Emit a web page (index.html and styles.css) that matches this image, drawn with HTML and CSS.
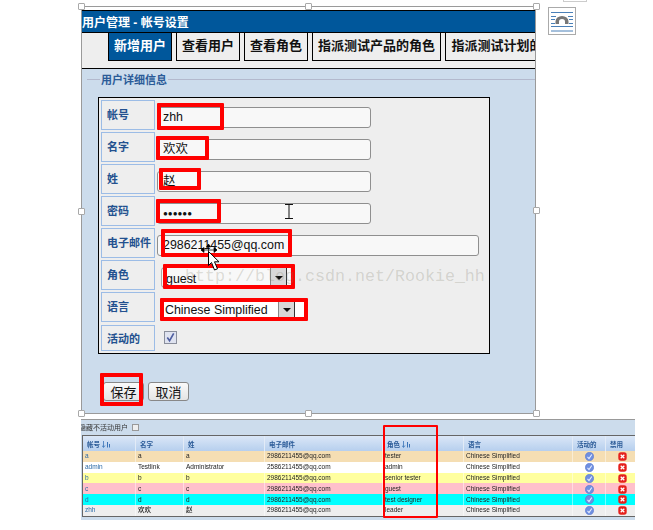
FILE: index.html
```html
<!DOCTYPE html>
<html lang="zh">
<head>
<meta charset="utf-8">
<title>用户管理 - 帐号设置</title>
<link rel="stylesheet" href="styles.css">
</head>
<body>
<svg class="defs" width="0" height="0">
  <symbol id="i-ok" viewBox="0 0 9 9"><circle cx="4.500" cy="4.500" r="4.200" fill="#6f8fe0" stroke="#5674cc" stroke-width=".5"/><path d="M2.500 4.800 4 6.500 6.800 2.500" fill="none" stroke="#e6edff" stroke-width="1.100"/></symbol>
  <symbol id="i-no" viewBox="0 0 9 9"><rect x=".3" y=".3" width="8.400" height="8.400" rx="2.600" fill="#e5201c"/><path d="M2.700 2.700 6.300 6.300M6.300 2.700 2.700 6.300" stroke="#fff" stroke-width="1.300"/></symbol>
  <symbol id="i-sort" viewBox="0 0 9 7"><path d="M1.500 0v6M0 4.500 1.500 6.500 3 4.500" fill="none" stroke="#3b74b8" stroke-width=".8"/><path d="M5 1h1v5.500H5zM7 3h1v3.500H7z" fill="#3b74b8"/></symbol>
</svg>
<main class="sheet">
  <section class="frame">
    <h1 class="title">用户管理 - 帐号设置</h1>
    <nav class="tabs">
      <a class="tab tab-on">新增用户</a>
      <a class="tab">查看用户</a>
      <a class="tab">查看角色</a>
      <a class="tab tab-wide">指派测试产品的角色</a>
      <a class="tab tab-cut">指派测试计划的角色</a>
    </nav>
    <div class="panel">
      <div class="legend-line"><span class="legend">用户详细信息</span></div>
      <div class="form-box">
        <div class="row"><label class="lab">帐号</label><div class="field">zhh</div></div>
        <div class="row"><label class="lab">名字</label><div class="field">欢欢</div></div>
        <div class="row"><label class="lab">姓</label><div class="field">赵</div></div>
        <div class="row"><label class="lab">密码</label><div class="field dots">●●●●●●</div></div>
        <div class="row"><label class="lab">电子邮件</label><div class="field field-long">2986211455@qq.com</div></div>
        <div class="row"><label class="lab">角色</label>
          <div class="pick pick-role"><span class="pick-text">guest</span><span class="pick-btn"><i class="caret"></i></span></div></div>
        <div class="row"><label class="lab">语言</label>
          <div class="pick pick-lang"><span class="pick-text">Chinese Simplified</span><span class="pick-btn"><i class="caret"></i></span></div></div>
        <div class="row row-last"><label class="lab">活动的</label>
          <span class="check"><svg viewBox="0 0 12 12" width="11" height="11"><path d="M2.500 6 5 9.500 9.500 1.500" fill="none" stroke="#4f5fa0" stroke-width="1.800"/></svg></span></div>
      </div>
      <div class="actions"><button class="btn">保存</button><button class="btn">取消</button></div>
    </div>
  </section>

  <section class="shot">
    <div class="shot-top">隐藏不活动用户 <span class="mini-check"></span></div>
    <table class="users">
      <colgroup><col class="c1"><col class="c2"><col class="c3"><col class="c4"><col class="c5"><col class="c6"><col class="c7"><col class="c8"></colgroup>
      <thead><tr><th>帐号 <svg class="sort"><use href="#i-sort"/></svg></th><th>名字</th><th>姓</th><th>电子邮件</th><th>角色 <svg class="sort"><use href="#i-sort"/></svg></th><th>语言</th><th>活动的</th><th>禁用</th></tr></thead>
      <tbody>
        <tr class="r-tester"><td class="link">a</td><td>a</td><td>a</td><td>2986211455@qq.com</td><td>tester</td><td>Chinese Simplified</td><td class="mid"><svg class="ico"><use href="#i-ok"/></svg></td><td class="mid last"><svg class="ico"><use href="#i-no"/></svg></td></tr>
        <tr class="r-admin"><td class="link">admin</td><td>Testlink</td><td>Administrator</td><td>2586211455@qq.com</td><td>admin</td><td>Chinese Simplified</td><td class="mid"><svg class="ico"><use href="#i-ok"/></svg></td><td class="mid last"><svg class="ico"><use href="#i-no"/></svg></td></tr>
        <tr class="r-senior"><td class="link">b</td><td>b</td><td>b</td><td>2986211455@qq.com</td><td>senior tester</td><td>Chinese Simplified</td><td class="mid"><svg class="ico"><use href="#i-ok"/></svg></td><td class="mid last"><svg class="ico"><use href="#i-no"/></svg></td></tr>
        <tr class="r-guest"><td class="link">c</td><td>c</td><td>c</td><td>2986211455@qq.com</td><td>guest</td><td>Chinese Simplified</td><td class="mid"><svg class="ico"><use href="#i-ok"/></svg></td><td class="mid last"><svg class="ico"><use href="#i-no"/></svg></td></tr>
        <tr class="r-design"><td class="link">d</td><td>d</td><td>d</td><td>2986211455@qq.com</td><td>test designer</td><td>Chinese Simplified</td><td class="mid"><svg class="ico"><use href="#i-ok"/></svg></td><td class="mid last"><svg class="ico"><use href="#i-no"/></svg></td></tr>
        <tr class="r-leader"><td class="link">zhh</td><td>欢欢</td><td>赵</td><td>2986211455@qq.com</td><td>leader</td><td>Chinese Simplified</td><td class="mid"><svg class="ico"><use href="#i-ok"/></svg></td><td class="mid last"><svg class="ico"><use href="#i-no"/></svg></td></tr>
      </tbody>
    </table>
  </section>
</main>

<!-- overlays: selection handles, red annotations, watermark, cursors -->
<i class="h h1"></i><i class="h h2"></i><i class="h h3"></i><i class="h h4"></i><i class="h h5"></i><i class="h h6"></i><i class="h h7"></i><i class="h h8"></i>
<i class="mark m1"></i><i class="mark m2"></i><i class="mark m3"></i><i class="mark m4"></i><i class="mark m5"></i><i class="mark m6"></i><i class="mark m7"></i><i class="mark m8"></i><i class="mark m9"></i>
<div class="wm">http://blog.csdn.net/Rookie_hh</div>
<svg class="ibeam" width="8" height="15" viewBox="0 0 8 15"><path d="M0 .5h8M4 .5v14M0 14.500h8" fill="none" stroke="#111"/></svg>
<svg class="move" width="18" height="12" viewBox="0 0 18 12"><path d="M1 6h16M1 6l3-2.500v5zM17 6l-3-2.500v5zM8.500 1v10M8.500 0 6.500 3h4z" fill="#000" stroke="#000" stroke-width=".7"/></svg>
<svg class="arrow" width="14" height="22" viewBox="0 0 14 22"><path d="M1.500 1.500v14l3-3 3 7.500 3-1.200-3-7h4.500z" fill="#fff" stroke="#000"/></svg>
<div class="layout-icon"><svg width="22" height="22" viewBox="0 0 22 22"><path d="M0 2.500h22M0 6.500h5M17 6.500h5M0 9.500h4M18 9.500h4M0 13.500h4M18 13.500h4M0 16.500h22M0 21h22" stroke="#4a80b8" fill="none"/><path d="M4.500 14v-2.500a6.500 5.500 0 0 1 13 0V14h-3.500v-2.500a3 2.500 0 0 0-6 0V14z" fill="#777"/></svg></div>
<i class="top-scrap"></i>
</body>
</html>
```
FILE: styles.css
```css
* { box-sizing: border-box; }
html, body { margin: 0; height: 530px; overflow: hidden; background: #fff; }
body { position: relative; font-family: "Liberation Sans", "Noto Sans CJK SC", sans-serif; }
.defs { position: absolute; }
.sheet { padding: 6px 0 0 81px; }

/* top picture */
.frame { width: 455px; height: 408px; border: 1px solid #9a9a9a; padding-top: 3px; background: #fff; overflow: hidden; }
.title { margin: 0; height: 23px; background: #00579b; border-top: 1px solid #000; border-bottom: 1px solid #000; color: #fff; font-size: 12px; line-height: 24px; font-weight: 700; white-space: nowrap; }
.tabs { display: flex; gap: 4px; height: 36px; padding-left: 26px; background: #eee; border-bottom: 1px solid #000; overflow: hidden; }
.tab { flex: none; width: 64px; height: 28px; background: #eee; border: 1px solid #000; border-top: 0; font-size: 13px; font-weight: 700; line-height: 26px; text-align: center; color: #111; }
.tab-on { background: #00579b; color: #fff; }
.tab-wide { width: 129px; }
.tab-cut { width: 129px; border-right: 0; }
.panel { height: 345px; background: #ccdcec; position: relative; }
.legend-line { position: absolute; left: 5px; right: 0; top: 10px; border-top: 1px solid #b3b9cd; }
.legend { position: absolute; left: 13px; top: -7px; padding: 0 1px; font-size: 11px; line-height: 15px; font-weight: 700; color: #2b5b98; background: #ccdcec; }
.form-box { position: absolute; left: 16px; top: 28px; width: 392px; height: 257px; background: #eee; border: 1px solid #000; padding: 2px; }
.row { display: flex; align-items: flex-start; height: 32px; }
.row-last { height: 27px; padding-top: 1px; }
.lab { flex: none; width: 54px; height: 30px; border: 1px solid #9cbce6; color: #23518f; font-size: 11px; line-height: 28px; font-weight: 700; padding-left: 5px; white-space: nowrap; }
.row-last .lab { height: 26px; line-height: 26px; }
.field { width: 214px; height: 21px; margin: 7px 0 0 2px; border: 1px solid #8f8f8f; border-radius: 3px; background: #f8f8f8; font-size: 12.400px; line-height: 19px; color: #111; padding-left: 5px; white-space: nowrap; }
.field-long { width: 322px; }
.dots { font-size: 8px; padding-left: 5px; }
.pick { display: flex; font-size: 12.400px; color: #111; }
.pick-role { width: 129px; height: 21px; margin: 7px 0 0 6px; background: #f8f8f8; border: 1px solid #aaa; border-right: 0; border-radius: 4px 0 0 4px; padding-left: 4px; line-height: 22px; }
.pick-lang { width: 140px; height: 17px; margin: 9px 0 0 9px; background: #fff; padding-left: 1px; line-height: 18px; }
.pick-text { flex: 1; white-space: nowrap; }
.pick-btn { flex: none; width: 17px; background: #d8d8d8; border-left: 1px solid #888; border-right: 1px solid #333; display: flex; align-items: center; justify-content: center; }
.pick-role .pick-btn { margin-right: 3px; }
.pick-lang .pick-btn { margin-right: 9px; }
.caret { width: 0; height: 0; border: 4px solid transparent; border-top: 4px solid #111; border-bottom: 0; }
.check { width: 13px; height: 13px; margin: 6px 0 0 9px; border: 1px solid #8a8f9c; background: #dfe3f0; display: block; line-height: 0; }
.actions { position: absolute; left: 21px; top: 313px; display: flex; gap: 4px; }
.btn { width: 41px; height: 19px; padding: 0; border: 1px solid #888; border-radius: 3px; background: linear-gradient(#fafafa, #e4e4e4); font: 13px/17px "Noto Sans CJK SC", sans-serif; color: #111; }

/* lower picture */
.shot { width: 554px; height: 101px; margin-top: 5px; background: #ccdcec; border-top: 1px solid #999; filter: blur(.45px); overflow: hidden; position: relative; }
.shot-top { height: 15px; margin-left: -2px; padding-top: 1px; font-size: 7px; line-height: 13px; color: #333; white-space: nowrap; overflow: hidden; }
.mini-check { display: inline-block; width: 7px; height: 7px; margin-left: 2px; border: 1px solid #999; background: #eee; vertical-align: -1px; }
.users { width: 553px; margin-left: 1px; border-collapse: separate; border-spacing: 0; table-layout: fixed; border-top: 1px solid #666; border-bottom: 1px solid #666; border-left: 1px solid #666; font-size: 6.500px; font-weight: 500; color: #222; background: #fff; }
.c1 { width: 53px; } .c2 { width: 48px; } .c3 { width: 81px; } .c4 { width: 118px; } .c5 { width: 81px; } .c6 { width: 109px; } .c7 { width: 33px; } .c8 { width: 30px; }
.users th { height: 15px; padding: 0 0 0 4px; text-align: left; font-weight: 700; color: #2b5b98; background: linear-gradient(#dbe7f7, #b6cfee); border-right: 1px solid #e2ebf7; overflow: hidden; white-space: nowrap; }
.users td { height: 10.800px; line-height: 10px; padding: 0 0 0 2px; border-right: 1px solid rgba(255,255,255,.45); white-space: nowrap; overflow: hidden; }
.users .link { color: #2b6aa8; }
.users .mid { text-align: center; padding: 0; }
.users .last { padding-left: 3px; }
.sort { width: 9px; height: 7px; vertical-align: -1px; }
.ico { display: inline-block; width: 9px; height: 9px; vertical-align: middle; }
.r-tester td { background: #f5deb3; }
.r-admin td { background: #fff; }
.r-senior td { background: #ffff9f; }
.r-guest td { background: #ffc0cb; }
.r-design td { background: #00ffff; }
.r-leader td { background: #eee; }

/* overlays */
.h { position: absolute; width: 7px; height: 7px; background: #fff; border: 1px solid #a9a9a9; border-radius: 1px; }
.h1 { left: 78px; top: 3px; } .h2 { left: 305px; top: 3px; } .h3 { left: 533px; top: 3px; }
.h4 { left: 78px; top: 208px; } .h5 { left: 533px; top: 207px; }
.h6 { left: 78px; top: 410px; } .h7 { left: 305px; top: 410px; } .h8 { left: 533px; top: 410px; }
.mark { position: absolute; border: 4px solid #f00; border-radius: 1px; }
.m1 { left: 157px; top: 103px; width: 67px; height: 27px; }
.m2 { left: 156px; top: 136px; width: 53px; height: 24px; }
.m3 { left: 159px; top: 168px; width: 42px; height: 22px; }
.m4 { left: 156px; top: 199px; width: 65px; height: 24px; }
.m5 { left: 161px; top: 229px; width: 131px; height: 28px; }
.m6 { left: 163px; top: 264px; width: 132px; height: 25px; }
.m7 { left: 160px; top: 298px; width: 148px; height: 23px; }
.m8 { left: 100px; top: 373px; width: 43px; height: 33px; }
.m9 { left: 383px; top: 425px; width: 55px; height: 93px; border-width: 2px; }
.wm { position: absolute; left: 185px; top: 266px; font: 16.670px/22px "Liberation Mono", monospace; color: rgba(120,120,100,.24); white-space: nowrap; }
.ibeam { position: absolute; left: 285px; top: 204px; }
.move { position: absolute; left: 200px; top: 244px; }
.arrow { position: absolute; left: 207px; top: 250px; }
.layout-icon { position: absolute; left: 548px; top: 7px; width: 28px; height: 28px; border: 1px solid #aaa; background: #fff; padding: 2px; }
.top-scrap { position: absolute; left: 563px; top: 0; width: 24px; height: 2px; border: 1px solid #ccc; border-top: 0; }
```
